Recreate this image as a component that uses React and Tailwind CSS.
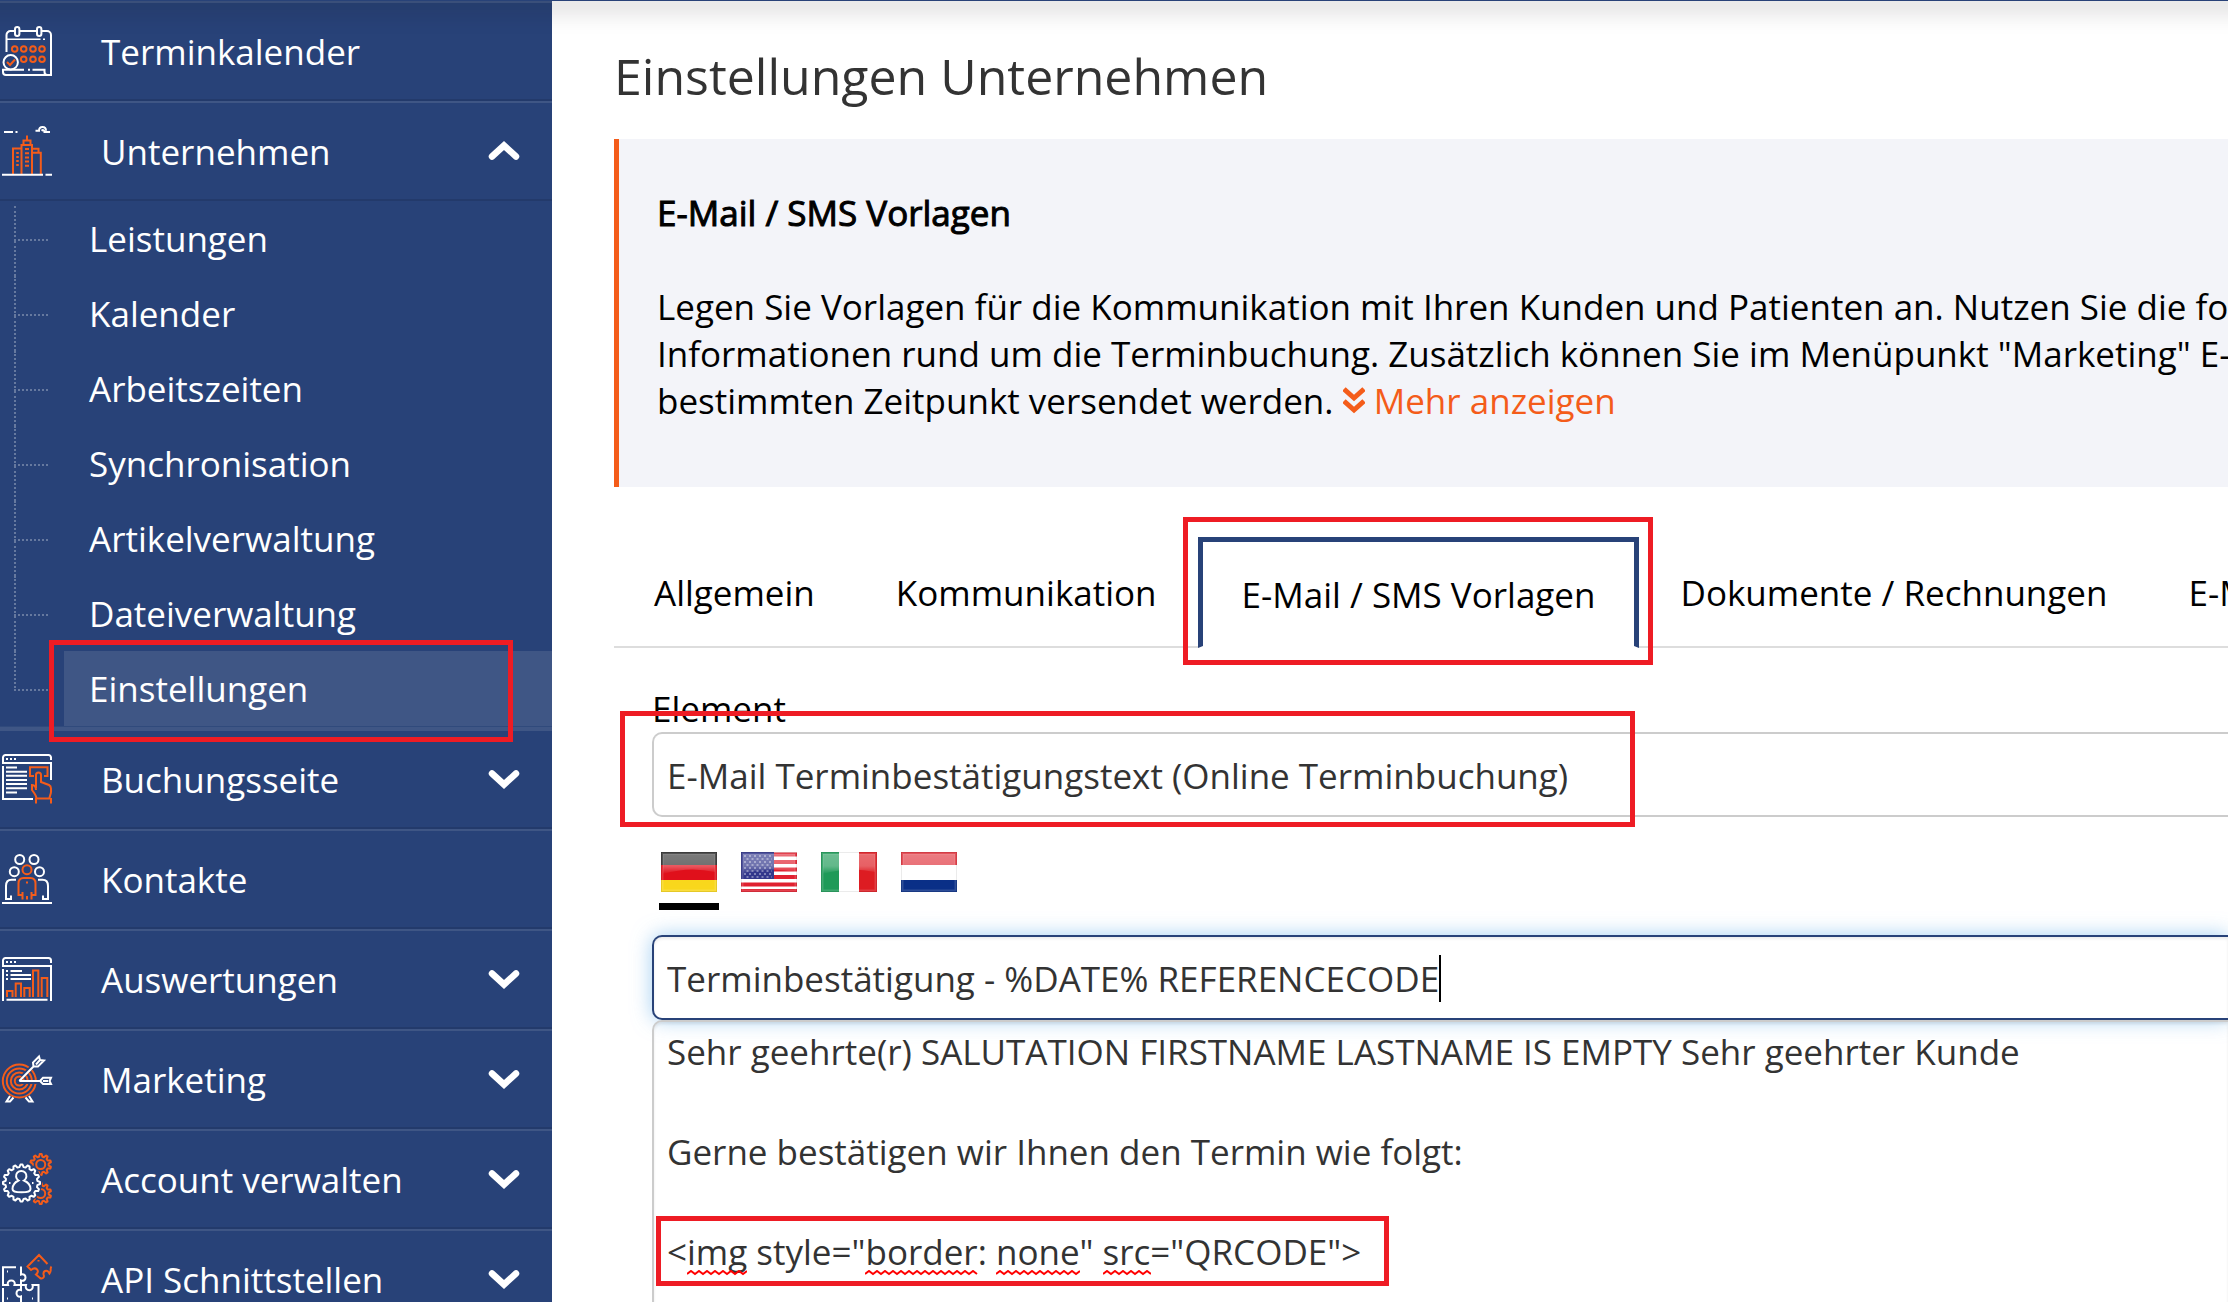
import React from "react";

const ORANGE = "#f45c1a";

function gearPath(cx, cy, teeth, outer, inner) {
  const step = (Math.PI * 2) / teeth;
  let d = "";
  for (let i = 0; i < teeth; i++) {
    const a = i * step - Math.PI / 2;
    const pts = [
      [a - step * 0.34, inner],
      [a - step * 0.14, outer],
      [a + step * 0.14, outer],
      [a + step * 0.34, inner],
    ];
    pts.forEach(([t, r], k) => {
      d += `${i === 0 && k === 0 ? "M" : "L"}${(cx + r * Math.cos(t)).toFixed(2)} ${(cy + r * Math.sin(t)).toFixed(2)}`;
    });
  }
  return d + "Z";
}

function Icon({ children }) {
  return (
    <svg viewBox="0 0 50 50" className="size-[50px] shrink-0 overflow-visible" fill="none" stroke="#fff" strokeWidth="2" aria-hidden="true">
      {children}
    </svg>
  );
}

const CalendarIcon = () => (
  <Icon>
    <path d="M4.5 26V9a4 4 0 0 1 4-4H13M17.5 5H35M39.5 5H45a4 4 0 0 1 4 4V49H4a3 3 0 0 1-3-3V43.800H22M26 43.800h2M30.500 43.800H42.500V46a3 3 0 0 0 3 3" />
    <rect x="13" y="1" width="4.400" height="9" rx="2.200" />
    <rect x="35" y="1" width="4.400" height="9" rx="2.200" />
    <path d="M5 13.300H38.500M41 13.300h2" strokeWidth="1.500" />
    <g stroke={ORANGE} strokeWidth="2">
      {[12.7, 21.700, 31, 40].map((x) => <circle key={x} cx={x} cy="23" r="2.800" />)}
      {[21.700, 31, 40].map((x) => <circle key={x} cx={x} cy="33.300" r="2.800" />)}
      <path d="M5 36l3 3 5-5.500" />
    </g>
    <circle cx="8.700" cy="36.300" r="7.200" />
  </Icon>
);

const CityIcon = () => (
  <Icon>
    <g stroke={ORANGE}>
      <path d="M11 48V22.500H19M19.500 48V19H30V48M30 22.700H36.500V26.500M31 26.800H38.800V48M21.500 19V14.500H28.500V19M25 14V9.500" />
      <path d="M15.500 26V41" strokeWidth="2.500" strokeDasharray="2 2" />
      <path d="M25 22V41.500" strokeWidth="4" strokeDasharray="2 2.200" />
    </g>
    <path d="M0 48.800H41M43.500 48.800H50M2 6h9M13.500 6h2M33.500 4.700H37c0-5 7-5 7 0M39.500 4.700c2-1.500 3 .5 3 1.300H48" />
  </Icon>
);

const BookingIcon = () => (
  <Icon>
    <path d="M1 8V3.500A2.500 2.500 0 0 1 3.500 1H46.500A2.500 2.500 0 0 1 49 3.500V6M0 9H49V26M1 12V45H31" />
    <path d="M4 5h2M8 5h2M12 5h2M4 13.500H15M4 17.700H25M4 21.800H25M4 26H25M4 30H25M4 34.300H25M4 38.500H15" />
    <g stroke={ORANGE}>
      <path d="M32 22H28V13.300H45.500V22H42" />
      <path d="M34 34V21a2.400 2.400 0 0 1 5 0V28L47 31c1.500.8 2 2 2 3.500V38c0 2-1.500 4-1.500 6.500H34.500c0-2-1-3.500-2-5L30 36V31c3 0 4 2.500 4 5M34 44V49.500M49 44V49.500" />
    </g>
  </Icon>
);

const ContactsIcon = () => (
  <Icon>
    <circle cx="17.700" cy="5.500" r="4.500" />
    <circle cx="32" cy="5.500" r="4.500" />
    <circle cx="12.300" cy="17.700" r="4.500" />
    <circle cx="37.500" cy="17.700" r="4.500" />
    <path d="M14 25.800H9.500C5 25.800 4 29 4 32V45H9V41.500M36 25.800H40.500C45 25.800 46 29 46 32V45H41V41.500M0 49H50" />
    <g stroke={ORANGE}>
      <circle cx="25" cy="15.700" r="4.500" />
      <path d="M20.500 45.500V41H16.500V29.500C16.500 26 18.500 24 21.500 24H28.500C31.500 24 33.500 26 33.500 29.500V41H29.500V45.500M20.500 38V45.500M29.500 38V45.500M25 42V45.500M25 27.500v2" />
    </g>
  </Icon>
);

const ReportsIcon = () => (
  <Icon>
    <path d="M1 11V6.500A2.500 2.500 0 0 1 3.500 4H46.500A2.500 2.500 0 0 1 49 6.500V9M0 12H49V47M1 15V47M4.500 45.800H45.500" />
    <path d="M4 8h2M8 8h2M12 8h2M4 17h2M4 21h2M4 25h2M8.500 17H20M8.500 21H29M8.500 25H29" />
    <path stroke={ORANGE} d="M5 43V37H10.500V43M13.700 43V29.500H19V43M22.300 43V34H27.700V43M31 43V16.500H36.300V43M39.700 43V24H45.300V43" />
  </Icon>
);

const MarketingIcon = () => (
  <Icon>
    <g stroke={ORANGE}>
      {[16.500, 12.500, 8.500, 4.500].map((r) => <circle key={r} cx="17.300" cy="27" r={r} />)}
    </g>
    <path stroke="#284278" strokeWidth="4" d="M20 23L34 9M20 28H36" />
    <path d="M17.300 27L31.500 12.500M17.300 27H38M31.500 12.500L31 8.500 37 2.500 38 6 42 6.500 36 12.500ZM38 27L41 23.800H49L47.500 27 49 30H41ZM34 10.500L38 6M41 27h5M8 42L4.500 47.500H8L11.500 43.500M27 42L30.500 47.500H27L23.500 43.500" />
  </Icon>
);

const AccountIcon = () => (
  <Icon>
    <g stroke={ORANGE} strokeLinejoin="round">
      <path d={gearPath(38.7, 10.5, 10, 10.5, 8)} />
      <path d={gearPath(38.7, 39.5, 10, 10.5, 8)} />
      <circle cx="38.700" cy="10.500" r="4.500" />
      <circle cx="38.700" cy="39.500" r="4.500" />
    </g>
    <circle cx="19" cy="29" r="21" fill="#284278" stroke="none" />
    <path d={gearPath(19.5, 29, 16, 18.5, 16)} strokeLinejoin="round" />
    <path d="M7 29h1.500M30 29h1.500M16.500 26.500a5.200 5.200 0 1 1 5.500 0C25.500 28 28.500 31 28.500 35c0 2.500-2 3.300-9 3.300s-9-.8-9-3.300c0-4 3-7 6-8.500Z" />
  </Icon>
);

const ApiIcon = () => (
  <Icon>
    <path d="M14 13.300H1V31H6C4 25 14.500 25 12.500 31H19V26.500C25 28.500 25 18.500 19 20.500V12.500M5 17.500h1M1 34V49M19 31H24C22 38 32.500 38 30.500 31H36.500V49M19 31V36C13 34 13 44.500 19 42.500V49M5 44.500h1M30 44.500h1M2 49H36" />
    <path stroke={ORANGE} d="M45.500 10L37 1 25.500 12.500 29 16C34 12 38.500 17 34 20.500L38 24C40 25 42 24 42 22 40 17 45 14.500 47.500 19.500 50 17 47.500 14.500 49.500 12.500M36.500 6v1.500" />
  </Icon>
);

function Chevron({ up }) {
  return (
    <svg viewBox="0 0 32 20" className="h-5 w-8 shrink-0" fill="none" stroke="#fff" strokeWidth="6.500" strokeLinecap="round" aria-hidden="true">
      <path d={up ? "M4 15.500L16 4.500 28 15.500" : "M4 4.500L16 15.500 28 4.500"} />
    </svg>
  );
}

function NavRow({ icon, label, state }) {
  return (
    <button type="button" className="flex h-[100px] w-full items-center border-y-2 border-t-[#3f5685] border-b-[#233a6b] pr-8 pl-[2px] text-left">
      {icon}
      <span className="ml-[49px] flex-1 whitespace-nowrap">{label}</span>
      {state && <Chevron up={state === "open"} />}
    </button>
  );
}

const subItems = ["Leistungen", "Kalender", "Arbeitszeiten", "Synchronisation", "Artikelverwaltung", "Dateiverwaltung", "Einstellungen"];

function SubItem({ label, active, first }) {
  return (
    <li className="flex h-[75px]">
      <div className="ml-[14px] flex w-[34px] flex-col" aria-hidden="true">
        <div className={first ? "mt-[5px] h-[35px] border-b-2 border-l-2 border-dotted border-[#66799f]" : "h-10 border-b-2 border-l-2 border-dotted border-[#66799f]"} />
        {!active && <div className="flex-1 border-l-2 border-dotted border-[#66799f]" />}
      </div>
      <div className="relative ml-4 flex-1">
        <a href="#" className={active ? "flex h-full items-center bg-[#3f5685] pl-[25px]" : "flex h-full items-center pl-[25px]"}>{label}</a>
        {active && <div className="pointer-events-none absolute -top-[11px] right-[39px] -bottom-4 -left-[15px] z-10 border-5 border-[#ee1c24]" />}
      </div>
    </li>
  );
}

function Sidebar() {
  return (
    <nav className="w-[552px] shrink-0 bg-[#284278] text-white">
      <NavRow icon={<CalendarIcon />} label="Terminkalender" />
      <NavRow icon={<CityIcon />} label="Unternehmen" state="open" />
      <ul>
        {subItems.map((s, i) => <SubItem key={s} label={s} first={i === 0} active={s === "Einstellungen"} />)}
      </ul>
      <div className="h-[3px] border-t border-[#304a7c] bg-[#3f5685]" />
      <NavRow icon={<BookingIcon />} label="Buchungsseite" state="closed" />
      <NavRow icon={<ContactsIcon />} label="Kontakte" />
      <NavRow icon={<ReportsIcon />} label="Auswertungen" state="closed" />
      <NavRow icon={<MarketingIcon />} label="Marketing" state="closed" />
      <NavRow icon={<AccountIcon />} label="Account verwalten" state="closed" />
      <NavRow icon={<ApiIcon />} label="API Schnittstellen" state="closed" />
    </nav>
  );
}

function Flag({ label, children, active }) {
  return (
    <button type="button" aria-label={label} className={active ? "border-b-7 border-black px-[2px] pb-[11px]" : "border-b-7 border-transparent px-[2px] pb-[11px]"}>
      <svg viewBox="0 0 56 40" className="h-10 w-14" aria-hidden="true">
        {children}
        <rect x="1.500" y="1.500" width="53" height="37" fill="none" stroke="#fff" strokeOpacity=".15" strokeWidth="2" />
        <path d="M2 2H54V20Q28 14 2 22Z" fill="url(#flag-gloss)" />
        <rect x=".5" y=".5" width="55" height="39" fill="none" stroke="#000" strokeOpacity=".08" />
      </svg>
    </button>
  );
}

function Flags() {
  return (
    <div className="mt-[35px] ml-[7px] flex gap-5">
      <svg className="absolute size-0" aria-hidden="true">
        <linearGradient id="flag-gloss" x1="0" y1="0" x2="0" y2="1">
          <stop offset="0" stopColor="#fff" stopOpacity=".35" />
          <stop offset=".6" stopColor="#fff" stopOpacity=".3" />
          <stop offset="1" stopColor="#fff" stopOpacity="0" />
        </linearGradient>
      </svg>
      <Flag label="Deutsch" active>
        <path fill="#333" d="M0 0H56V13H0Z" /><path fill="#e0101b" d="M0 13H56V28H0Z" /><path fill="#f9d71c" d="M0 28H56V40H0Z" />
      </Flag>
      <Flag label="English">
        <path fill="#fff" d="M0 0H56V40H0Z" />
        <path stroke="#e0202f" strokeWidth="4" d="M0 2.500H56M0 10H56M0 17.500H56M0 25H56M0 32.500H56M0 39H56" />
        <path fill="#33388c" d="M0 0H33V27H0Z" />
        <g stroke="#fff" strokeOpacity=".5" strokeWidth="1.500" strokeDasharray="2 3">
          <path d="M3 4H31M3 10H31M3 16H31M3 22H31" /><path d="M5.500 7H31M5.500 13H31M5.500 19H31M5.500 25H31" />
        </g>
      </Flag>
      <Flag label="Italiano">
        <path fill="#fff" d="M0 0H56V40H0Z" /><path fill="#1f9a58" d="M0 0H18V40H0Z" /><path fill="#dd1c22" d="M38 0H56V40H38Z" />
      </Flag>
      <Flag label="Nederlands">
        <path fill="#fff" d="M0 0H56V40H0Z" /><path fill="#e0343e" d="M0 0H56V13H0Z" /><path fill="#0a2f87" d="M0 28H56V40H0Z" />
      </Flag>
    </div>
  );
}

function Squiggle({ className, width }) {
  let d = "M0 4";
  for (let x = 4, up = true; x <= width; x += 4, up = !up) d += `L${x} ${up ? 1 : 4}`;
  return (
    <svg className={className} width={width} height="6" fill="none" stroke="#f00" strokeWidth="2" aria-hidden="true">
      <path d={d} />
    </svg>
  );
}

const tabClass = "mr-px h-[110px] px-10";

export default function App() {
  return (
    <div className="relative h-screen overflow-hidden bg-white font-['Open_Sans','Noto_Sans',sans-serif] text-[35px] leading-[47px] text-black">
      <header className="relative z-20 -mx-10 h-px bg-[#284278] shadow-[0_2px_24px_2px_rgba(20,15,20,0.55)]" />
      <div className="flex min-h-full">
        <Sidebar />
        <main className="min-w-0 flex-1 overflow-hidden pl-[62px]">
          <h1 className="mt-[41px] text-[50px] leading-[68px] whitespace-nowrap text-[#333]">Einstellungen Unternehmen</h1>
          <section className="mt-[29px] h-[348px] border-l-5 border-[#f45c1a] bg-[#f3f4f9] pt-[50px] pl-[38px] whitespace-nowrap">
            <h2 className="[-webkit-text-stroke:1px_black]">E-Mail / SMS Vorlagen</h2>
            <p className="mt-[47px]">
              Legen Sie Vorlagen für die Kommunikation mit Ihren Kunden und Patienten an. Nutzen Sie die fo<br />
              Informationen rund um die Terminbuchung. Zusätzlich können Sie im Menüpunkt "Marketing" E-<br />
              bestimmten Zeitpunkt versendet werden.{" "}
              <a href="#" className="text-[#f45c1a]">
                <svg viewBox="1 0 22 28" className="inline h-7 w-[22px] align-baseline" fill="none" stroke="currentColor" strokeWidth="5" aria-hidden="true">
                  <path d="M2 3L12 12 22 3M2 15L12 24 22 15" />
                </svg>{" "}
                Mehr anzeigen
              </a>
            </p>
          </section>
          <div role="tablist" className="mt-[50px] flex h-[111px] items-start border-b-2 border-[#ddd] whitespace-nowrap">
            <button type="button" role="tab" className={tabClass}>Allgemein</button>
            <button type="button" role="tab" className={tabClass}>Kommunikation</button>
            <div className="relative mr-px">
              <button type="button" role="tab" aria-selected="true" className="h-[111px] border-5 border-b-2 border-[#284278] border-b-white bg-white px-[39px]">E-Mail / SMS Vorlagen</button>
              <div className="pointer-events-none absolute -top-5 -right-[14px] -bottom-[17px] -left-[15px] border-5 border-[#ee1c24]" />
            </div>
            <button type="button" role="tab" className={tabClass}>Dokumente / Rechnungen</button>
            <button type="button" role="tab" className={tabClass}>E-Mail</button>
          </div>
          <form className="ml-[38px] pt-[37px] text-[#333]">
            <label htmlFor="element" className="block text-black">Element</label>
            <div className="relative">
              <select id="element" className="block h-[85px] w-full appearance-none rounded-l-[10px] border-2 border-r-0 border-[#ccc] bg-white pt-[2px] pl-[13px]">
                <option>E-Mail Terminbestätigungstext (Online Terminbuchung)</option>
              </select>
              <div className="pointer-events-none absolute -top-[21px] -bottom-[10px] -left-8 w-[1015px] border-5 border-[#ee1c24]" />
            </div>
            <Flags />
            <div className="relative mt-[25px]">
              <input aria-label="Betreff" defaultValue="Terminbestätigung - %DATE% REFERENCECODE" className="block h-[85px] w-full rounded-l-[10px] border-2 border-r-0 border-[#284278] bg-white pt-[2px] pl-[13px] shadow-[inset_0_2px_3px_rgba(0,0,0,0.08),0_0_20px_rgba(102,175,233,0.6)]" />
              <span className="absolute top-5 left-[787px] h-[47px] w-[2px] bg-black" />
            </div>
            <div className="relative">
              <textarea aria-label="Nachricht" spellCheck={false} rows={6} className="block w-full resize-none overflow-hidden rounded-tl-[10px] border-2 border-r-0 border-[#ccc] pt-[5px] pl-[13px] leading-[50px] shadow-[inset_0_2px_3px_rgba(0,0,0,0.08)]" defaultValue={'Sehr geehrte(r) SALUTATION FIRSTNAME LASTNAME IS EMPTY Sehr geehrter Kunde\n\nGerne bestätigen wir Ihnen den Termin wie folgt:\n\n<img style="border: none" src="QRCODE">'} />
              <Squiggle className="absolute top-[250px] left-[35px]" width={60} />
              <Squiggle className="absolute top-[250px] left-[213px]" width={113} />
              <Squiggle className="absolute top-[250px] left-[344px]" width={84} />
              <Squiggle className="absolute top-[250px] left-[451px]" width={48} />
              <div className="pointer-events-none absolute top-[196px] left-1 h-[70px] w-[733px] border-5 border-[#ee1c24]" />
            </div>
          </form>
        </main>
      </div>
    </div>
  );
}
